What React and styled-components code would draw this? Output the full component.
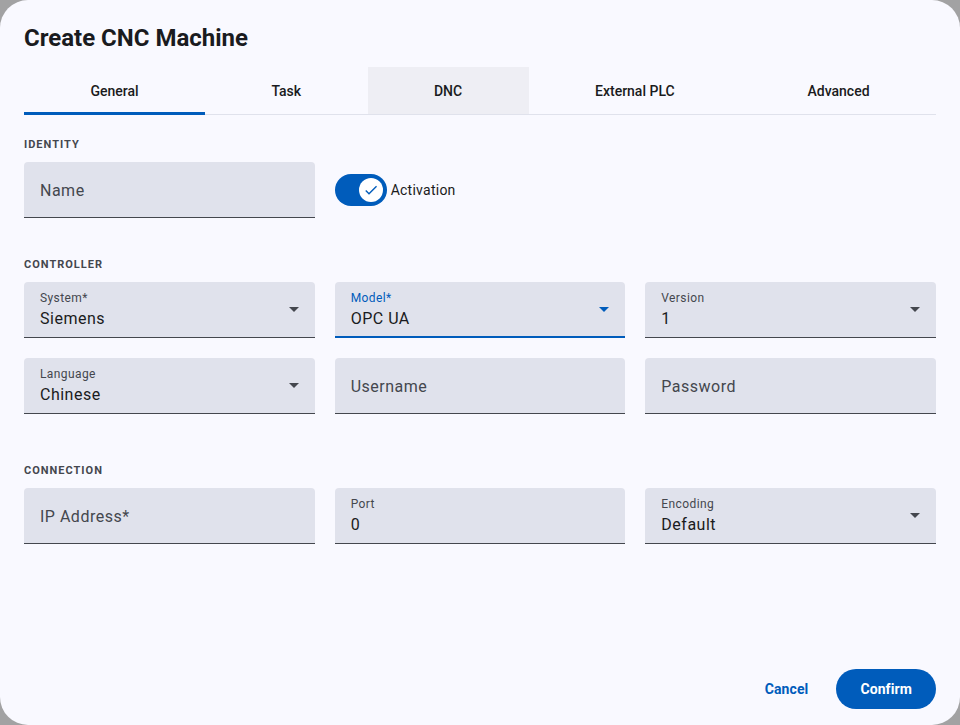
import React from "react";
import styled, { createGlobalStyle, css } from "styled-components";

const primary = "#005cbb";
const onSurface = "#1a1b20";
const onVariant = "#44474e";
const fieldBg = "#e0e2ec";

const GlobalStyle = createGlobalStyle`
  html, body {
    margin: 0;
    padding: 0;
    background: #a2a2a3;
  }
  body {
    font-family: Roboto, "Noto Sans", "Liberation Sans", sans-serif;
    color: ${onSurface};
  }
`;

const Dialog = styled.div`
  width: 960px;
  height: 725px;
  box-sizing: border-box;
  background: #f9f9ff;
  border-radius: 28px;
  padding: 22px 24px 16px;
  display: flex;
  flex-direction: column;
`;

const Title = styled.h1`
  margin: 0;
  font-size: 24px;
  line-height: 32px;
  font-weight: 700;
  color: ${onSurface};
`;

const TabBar = styled.div`
  margin-top: 13px;
  display: flex;
  border-bottom: 1px solid ${fieldBg};
`;

const Tab = styled.div`
  flex: 1 1 auto;
  height: 47px;
  padding: 1px 16px 0;
  box-sizing: border-box;
  display: flex;
  align-items: center;
  justify-content: center;
  position: relative;
  font-size: 14px;
  font-weight: 500;
  color: ${onSurface};
  background: ${(p) => (p.$hover ? "#eeeef4" : "transparent")};
  ${(p) =>
    p.$active &&
    css`
      &::after {
        content: "";
        position: absolute;
        left: 0;
        right: 0;
        bottom: -1px;
        height: 3px;
        background: ${primary};
      }
    `}
`;

const SectionLabel = styled.div`
  font-size: 11px;
  line-height: 16px;
  font-weight: 700;
  letter-spacing: 1px;
  color: ${onVariant};
  margin-top: ${(p) => p.$top}px;
  margin-bottom: 9px;
`;

const Grid = styled.div`
  display: grid;
  grid-template-columns: repeat(3, 1fr);
  column-gap: 20px;
  row-gap: 20px;
`;

const Field = styled.div`
  height: 56px;
  box-sizing: border-box;
  background: ${fieldBg};
  border-radius: 4px 4px 0 0;
  border-bottom: ${(p) => (p.$focused ? `2px solid ${primary}` : `1px solid ${onVariant}`)};
  padding: 0 16px;
  display: flex;
  align-items: center;
`;

const FieldText = styled.div`
  flex: 1;
  align-self: stretch;
  display: flex;
  flex-direction: column;
  padding-top: ${(p) => (p.$labelled ? 8 : 17)}px;
`;

const FloatLabel = styled.div`
  font-size: 12px;
  line-height: 16px;
  letter-spacing: 0.4px;
  color: ${(p) => (p.$focused ? primary : onVariant)};
`;

const Value = styled.div`
  font-size: 16px;
  line-height: 24px;
  letter-spacing: 0.5px;
  margin-top: ${(p) => (p.$afterLabel ? 1 : 0)}px;
  color: ${(p) => (p.$placeholder ? onVariant : onSurface)};
`;

const Arrow = styled.div`
  width: 0;
  height: 0;
  border-left: 5px solid transparent;
  border-right: 5px solid transparent;
  border-top: 5px solid ${(p) => (p.$focused ? primary : onVariant)};
`;

const SwitchCell = styled.div`
  display: flex;
  align-items: center;
  gap: 4px;
`;

const Track = styled.div`
  width: 52px;
  height: 32px;
  box-sizing: border-box;
  border-radius: 16px;
  background: ${primary};
  display: flex;
  align-items: center;
  justify-content: flex-end;
  padding-right: 4px;
`;

const Thumb = styled.div`
  width: 24px;
  height: 24px;
  border-radius: 50%;
  background: #ffffff;
  display: flex;
  align-items: center;
  justify-content: center;
`;

const SwitchLabel = styled.span`
  font-size: 14px;
  letter-spacing: 0.25px;
  color: ${onSurface};
`;

const Actions = styled.div`
  margin-top: auto;
  display: flex;
  justify-content: flex-end;
  align-items: center;
  gap: 16px;
`;

const Button = styled.button`
  height: 40px;
  border: none;
  border-radius: 20px;
  font-family: inherit;
  font-size: 14px;
  font-weight: 700;
  letter-spacing: 0.1px;
  padding: 0 ${(p) => (p.$filled ? 24 : 12)}px;
  background: ${(p) => (p.$filled ? primary : "transparent")};
  color: ${(p) => (p.$filled ? "#ffffff" : primary)};
`;

const TextField = ({ label, value, placeholder, select, focused }) => (
  <Field $focused={focused}>
    <FieldText $labelled={!!label}>
      {label && <FloatLabel $focused={focused}>{label}</FloatLabel>}
      {value ? (
        <Value $afterLabel={!!label}>{value}</Value>
      ) : (
        <Value $placeholder>{placeholder}</Value>
      )}
    </FieldText>
    {select && <Arrow $focused={focused} />}
  </Field>
);

const tabs = ["General", "Task", "DNC", "External PLC", "Advanced"];

export default function App() {
  return (
    <>
      <GlobalStyle />
      <Dialog>
        <Title>Create CNC Machine</Title>
        <TabBar>
          {tabs.map((t, i) => (
            <Tab key={t} $active={i === 0} $hover={t === "DNC"}>
              {t}
            </Tab>
          ))}
        </TabBar>

        <SectionLabel $top={22}>IDENTITY</SectionLabel>
        <Grid>
          <TextField placeholder="Name" />
          <SwitchCell>
            <Track>
              <Thumb>
                <svg width="16" height="16" viewBox="0 0 24 24">
                  <path
                    d="M9 16.17L4.83 12l-1.42 1.41L9 19 21 7l-1.41-1.41z"
                    fill={primary}
                  />
                </svg>
              </Thumb>
            </Track>
            <SwitchLabel>Activation</SwitchLabel>
          </SwitchCell>
        </Grid>

        <SectionLabel $top={39}>CONTROLLER</SectionLabel>
        <Grid>
          <TextField label="System*" value="Siemens" select />
          <TextField label="Model*" value="OPC UA" select focused />
          <TextField label="Version" value="1" select />
          <TextField label="Language" value="Chinese" select />
          <TextField placeholder="Username" />
          <TextField placeholder="Password" />
        </Grid>

        <SectionLabel $top={49}>CONNECTION</SectionLabel>
        <Grid>
          <TextField placeholder="IP Address*" />
          <TextField label="Port" value="0" />
          <TextField label="Encoding" value="Default" select />
        </Grid>

        <Actions>
          <Button>Cancel</Button>
          <Button $filled>Confirm</Button>
        </Actions>
      </Dialog>
    </>
  );
}
